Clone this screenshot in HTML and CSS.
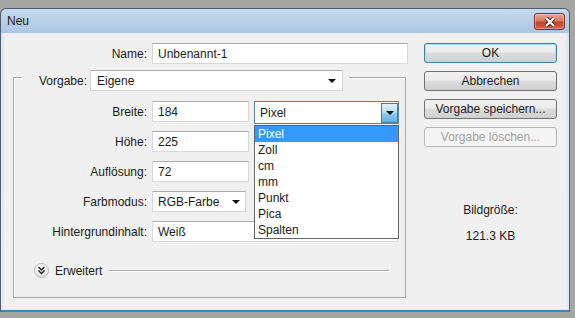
FILE: index.html
```html
<!DOCTYPE html>
<html>
<head>
  <meta charset="utf-8">
  <meta name="viewport" content="width=device-width, initial-scale=1.0">
  <link rel="stylesheet" href="styles.css">
</head>
<body>
  <div class="window">
    <div class="titlebar">
      <span class="title">Neu</span>
      <span class="close">
        <svg width="14" height="10" viewBox="0 0 14 10">
          <path d="M3 1 L11 9 M11 1 L3 9" stroke="#5e261c" stroke-width="4.2"/>
          <path d="M3 1 L11 9 M11 1 L3 9" stroke="#fff" stroke-width="2.2"/>
        </svg>
      </span>
    </div>

    <div class="client">
      <div class="form">
        <div class="name_row">
          <label>Name:</label>
          <div class="field">Unbenannt-1</div>
        </div>

        <div class="group">
          <div class="group_head">
            <label class="head_label">Vorgabe:</label>
            <div class="field select preset">Eigene<span class="arrow"></span></div>
          </div>

          <div class="rows">
            <label>Breite:</label>
            <div class="pair">
              <div class="field num">184</div>
              <div class="unit_wrap">
                <div class="field select unit">Pixel<span class="drop_btn"><span class="arrow"></span></span></div>
                <!-- open list of the unit select -->
                <ul class="dropdown">
                  <li class="sel">Pixel</li>
                  <li>Zoll</li>
                  <li>cm</li>
                  <li>mm</li>
                  <li>Punkt</li>
                  <li>Pica</li>
                  <li>Spalten</li>
                </ul>
              </div>
            </div>

            <label>Höhe:</label>
            <div class="field num">225</div>

            <label>Auflösung:</label>
            <div class="field num">72</div>

            <label>Farbmodus:</label>
            <div class="field select mode">RGB-Farbe<span class="arrow"></span></div>

            <label>Hintergrundinhalt:</label>
            <div class="field select background">Weiß<span class="arrow"></span></div>
          </div>

          <div class="extra">
            <span class="expand">
              <svg width="9" height="9" viewBox="0 0 9 9">
                <path d="M1.5 1 L4.5 4 L7.5 1 M1.5 4.5 L4.5 7.5 L7.5 4.5" fill="none" stroke="#222" stroke-width="1.4"/>
              </svg>
            </span>
            <span>Erweitert</span>
            <span class="rule"></span>
          </div>
        </div>
      </div>

      <div class="side">
        <div class="btn default">OK</div>
        <div class="btn">Abbrechen</div>
        <div class="btn">Vorgabe speichern...</div>
        <div class="btn disabled">Vorgabe löschen...</div>
        <div class="info">
          <div>Bildgröße:</div>
          <div class="size">121.3 KB</div>
        </div>
      </div>
    </div>
  </div>
</body>
</html>
```

FILE: styles.css
```css
body {
  margin: 0;
  background-color: #a6a7a2;
  font-family: "Liberation Sans", Arial, sans-serif;
  font-size: 12px;
  color: #1b1b1b;
}
.window {
  margin-top: 8px;
  width: 568px;
  height: 301px;
  border: 1px solid #4f5d6d;
  border-bottom: 2px solid #3a88bd;
  border-radius: 6px 6px 0 0;
  background: linear-gradient(#c6d9ee, #abc6e4 24px, #dde8f3 24px, #e3ecf6);
  display: flex;
  flex-direction: column;
}
.titlebar {
  height: 24px;
  display: flex;
  justify-content: space-between;
  align-items: center;
  padding: 0 4px 0 6px;
}
.title {
  font-size: 12px;
  color: #1a1a1a;
}
.close {
  align-self: flex-start;
  margin-top: 4px;
  width: 31px;
  height: 17px;
  box-sizing: border-box;
  border: 1px solid #7a3226;
  border-radius: 3px;
  background: linear-gradient(#e9a593, #d87b66 45%, #c2432b 55%, #d6634a);
  box-shadow: inset 0 0 0 1px rgba(255,255,255,0.35);
  display: flex;
  align-items: center;
  justify-content: center;
}
.client {
  flex: 1;
  margin: 0 3px 1px 3px;
  background-color: #f0f0f0;
  display: flex;
}
.form {
  width: 406px;
  padding-top: 10px;
}
label {
  text-align: right;
}
.field {
  height: 21px;
  box-sizing: border-box;
  border: 1px solid #d5d8dc;
  border-top-color: #abadb3;
  background-color: #fff;
  padding-left: 5px;
  display: flex;
  align-items: center;
}
.select {
  justify-content: space-between;
}
.arrow {
  width: 0;
  height: 0;
  border-left: 4px solid transparent;
  border-right: 4px solid transparent;
  border-top: 4px solid #111;
  margin-right: 5px;
}
.name_row {
  display: grid;
  grid-template-columns: 143px 256px;
  column-gap: 5px;
  align-items: center;
}
.group {
  margin: 13px 0 0 9px;
  width: 393px;
  height: 221px;
  box-sizing: border-box;
  border: 1px solid #a8a8a8;
  box-shadow: inset 1px 1px #fff;
}
.group_head {
  display: flex;
  align-items: center;
  gap: 3px;
  width: fit-content;
  margin: -8px 0 0 8px;
  padding-right: 6px;
  background-color: #f0f0f0;
}
.head_label {
  width: 65px;
}
.preset {
  width: 253px;
  padding-left: 6px;
}
.preset .arrow {
  margin-right: 6px;
}
.rows {
  display: grid;
  grid-template-columns: 133px auto;
  column-gap: 5px;
  row-gap: 9px;
  align-items: center;
  margin-top: 10px;
}
.pair {
  display: flex;
  gap: 5px;
}
.num {
  width: 97px;
}
.unit_wrap {
  position: relative;
  width: 145px;
}
.unit {
  height: 23px;
  margin-bottom: -2px;
  border-color: #5c83aa;
  padding-right: 0;
}
.drop_btn {
  width: 17px;
  height: 20px;
  box-sizing: border-box;
  margin-right: 0;
  border: 1px solid #3c7fb1;
  background: linear-gradient(#e4f4fc, #b7def5 45%, #8cc9ef 55%, #5fb1e4);
  display: flex;
  align-items: center;
  justify-content: center;
}
.drop_btn .arrow {
  margin: 0;
}
.dropdown {
  position: absolute;
  top: 24px;
  left: 0;
  z-index: 2;
  width: 145px;
  box-sizing: border-box;
  margin: 0;
  padding: 0;
  list-style: none;
  border: 1px solid #646464;
  background-color: #fff;
}
.dropdown li {
  height: 16px;
  line-height: 16px;
  padding-left: 3px;
}
.dropdown .sel {
  background-color: #3399ff;
  color: #fff;
}
.mode {
  width: 94px;
}
.background {
  width: 246px;
}
.extra {
  display: flex;
  align-items: center;
  gap: 6px;
  margin: 21px 16px 0 20px;
}
.expand {
  width: 15px;
  height: 15px;
  box-sizing: border-box;
  border: 1px solid #b5b5b5;
  border-radius: 50%;
  background: linear-gradient(#ffffff, #e2e2e2);
  display: flex;
  align-items: center;
  justify-content: center;
}
.rule {
  flex: 1;
  height: 1px;
  margin-left: 1px;
  background-color: #a8a8a8;
  border-bottom: 1px solid #fff;
}
.side {
  padding: 10px 0 0 14px;
  width: 133px;
}
.btn {
  height: 20px;
  box-sizing: border-box;
  border: 1px solid #707070;
  border-radius: 3px;
  background: linear-gradient(#f2f2f2, #ebebeb 45%, #dddddd 50%, #cfcfcf);
  text-align: center;
  line-height: 18px;
  margin-bottom: 8px;
}
.default {
  border-color: #3c7fb1;
  box-shadow: inset 0 0 0 1px #a6e2f7;
}
.disabled {
  color: #a3a3a3;
  border-color: #b4b7ba;
  background: #f4f4f4;
}
.info {
  margin-top: 56px;
  text-align: center;
  line-height: 15px;
}
.size {
  margin-top: 11px;
}
```
